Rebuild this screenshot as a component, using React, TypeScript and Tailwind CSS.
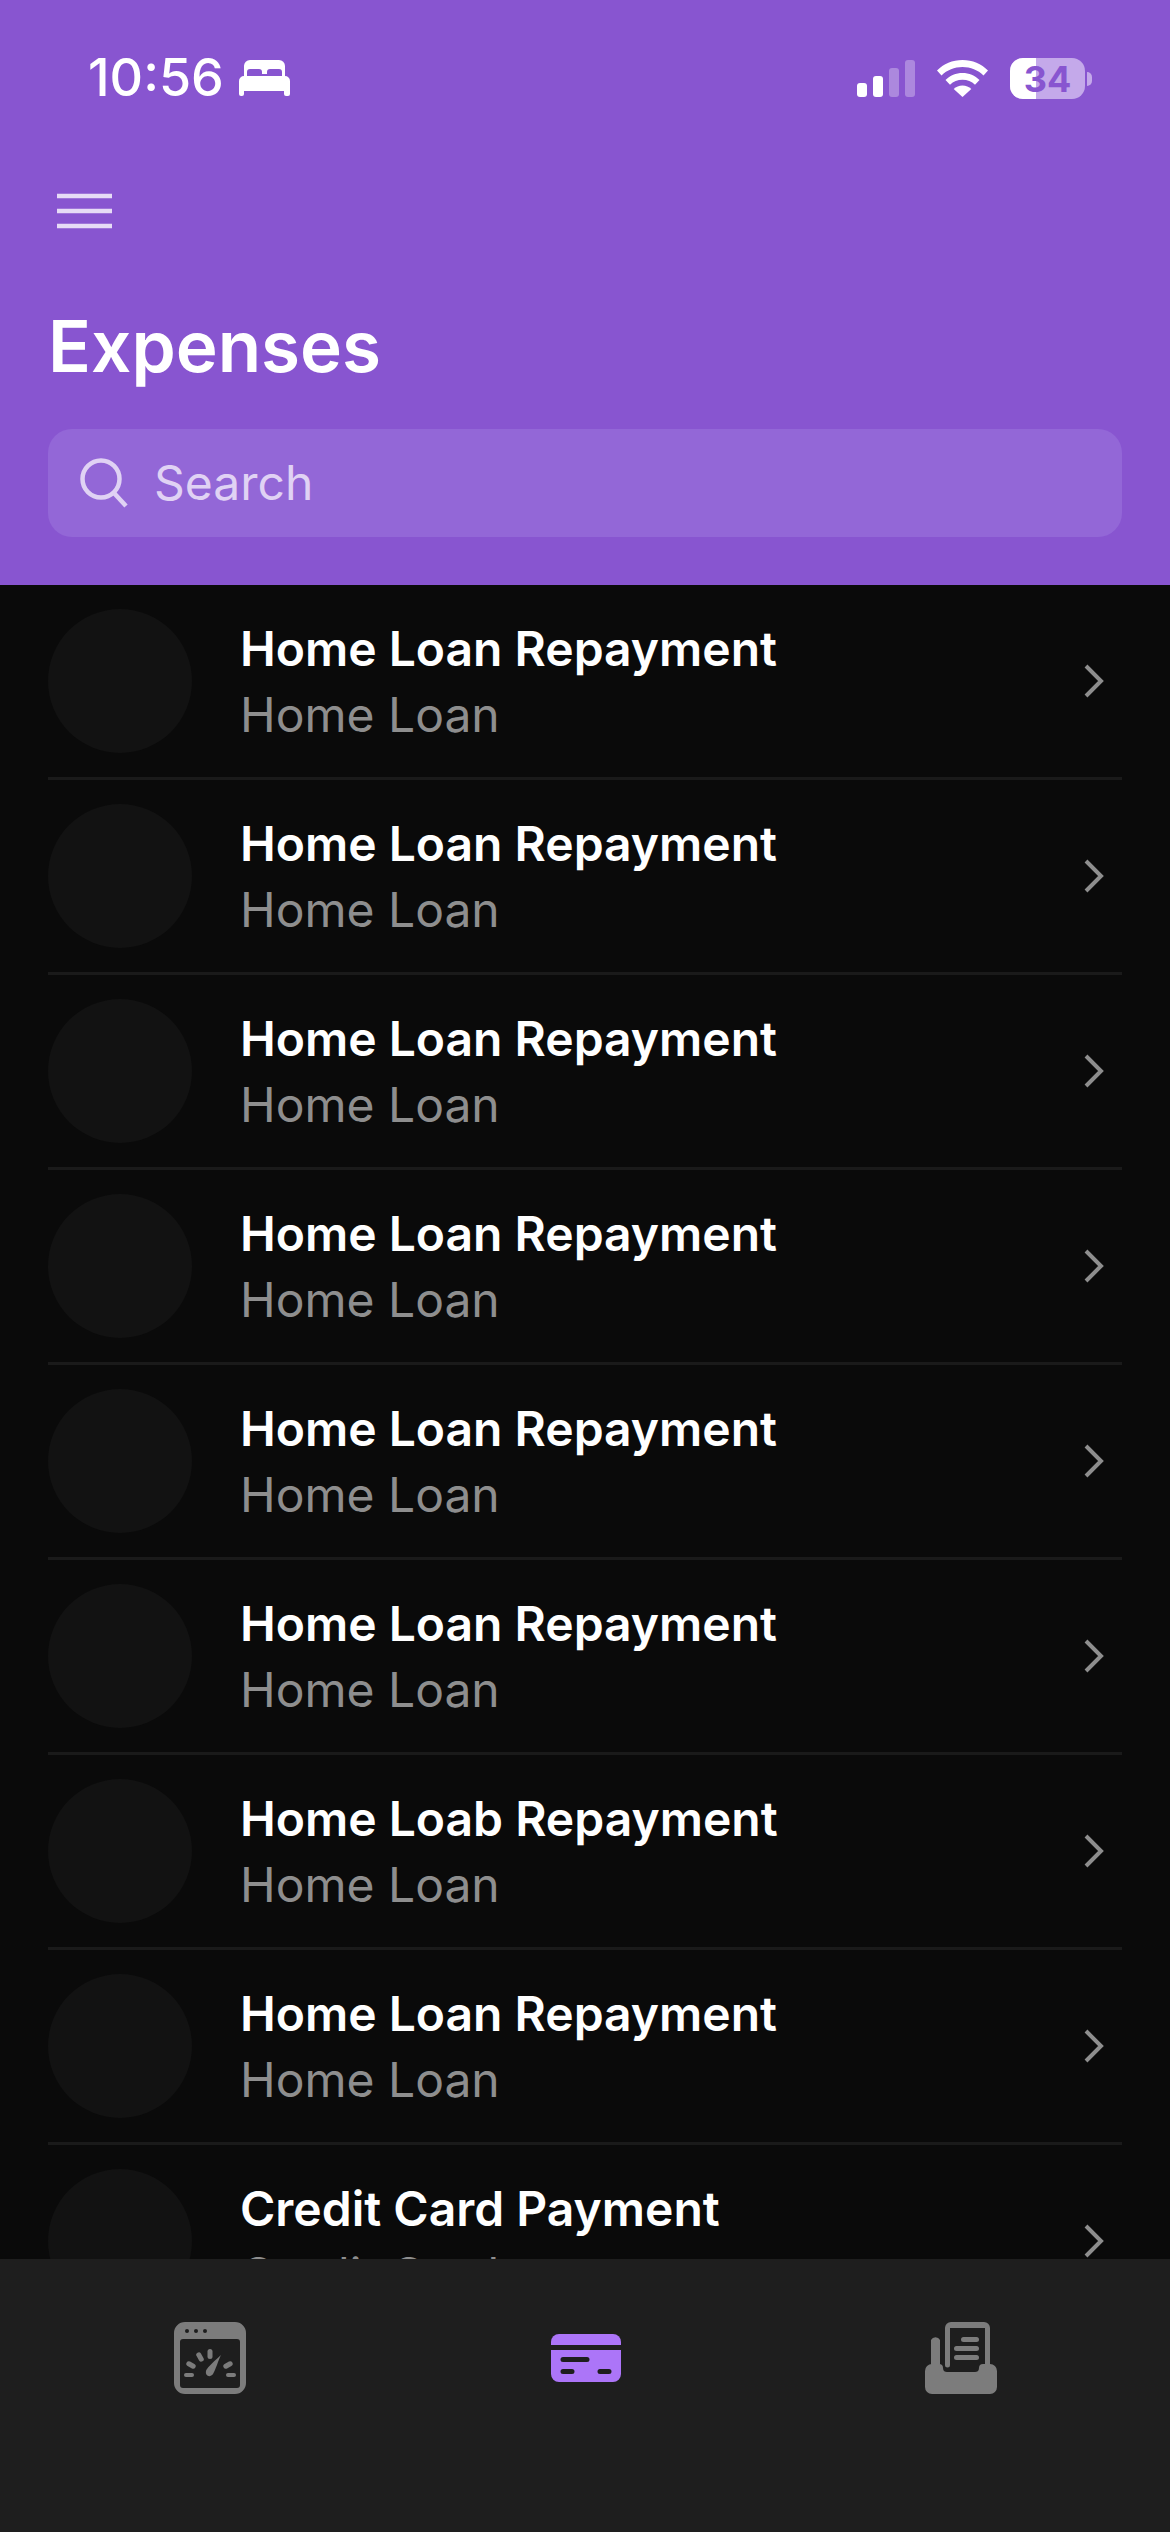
import React from "react";

const rows = [
  "Home Loan Repayment",
  "Home Loan Repayment",
  "Home Loan Repayment",
  "Home Loan Repayment",
  "Home Loan Repayment",
  "Home Loan Repayment",
  "Home Loab Repayment",
  "Home Loan Repayment",
];

const BedIcon = () => (
  <svg width="51" height="36" viewBox="0 0 51 36" className="ml-[15px]" fill="#fff">
    <path d="M5 17V6a6 6 0 0 1 6-6h29a6 6 0 0 1 6 6v11h-3v-5c0-2-1-3-3-3h-9c-2 0-3 1-3 3v2h-5v-2c0-2-1-3-3-3h-9c-2 0-3 1-3 3v5z" />
    <path d="M5 16h41a5 5 0 0 1 5 5v13a2 2 0 0 1-2 2h-2a2 2 0 0 1-2-2v-3H5v3a2 2 0 0 1-2 2H2a2 2 0 0 1-2-2V21a5 5 0 0 1 5-5z" />
  </svg>
);

const Signal = () => (
  <div className="flex items-end gap-[6px]">
    <div className="h-[14px] w-[10px] rounded-[3px] bg-white" />
    <div className="h-[21px] w-[10px] rounded-[3px] bg-white" />
    <div className="h-[29px] w-[10px] rounded-[3px] bg-white/30" />
    <div className="h-[37px] w-[10px] rounded-[3px] bg-white/30" />
  </div>
);

const Wifi = () => (
  <svg width="51" height="37" viewBox="0 0 51 37" fill="#fff">
    <path d="M25.5 0C35.5 0 44.5 4 51 10.5L46.5 15.5C41 10 33.5 7 25.5 7S10 10 4.5 15.5L0 10.5C6.5 4 15.5 0 25.5 0z" />
    <path d="M25.5 13c6.5 0 12.5 2.5 17 7L38 24.8c-3.3-3.2-7.700-5-12.500-5s-9.200 1.800-12.500 5L8.500 20c4.500-4.500 10.500-7 17-7z" />
    <path d="M25.500 25.500c3.400 0 6.500 1.300 8.800 3.500L25.500 37l-8.800-8c2.300-2.200 5.400-3.500 8.800-3.500z" />
  </svg>
);

const Battery = () => (
  <div className="flex items-center gap-[2px]">
    <div className="relative flex h-[41px] w-[75px] items-center justify-center overflow-hidden rounded-[13px] bg-[#c4a9ea]">
      <div className="absolute inset-y-0 left-0 w-[26px] bg-white" />
      <span className="relative text-[36px] font-bold leading-none text-[#8855d0]">34</span>
    </div>
    <div className="h-[14px] w-[5px] rounded-r-full bg-[#c4a9ea]" />
  </div>
);

const GaugeIcon = () => (
  <svg width="72" height="72" viewBox="0 0 72 72">
    <path
      fillRule="evenodd"
      fill="#7c7c7c"
      d="M11 0h50a11 11 0 0 1 11 11v50a11 11 0 0 1-11 11H11A11 11 0 0 1 0 61V11A11 11 0 0 1 11 0zM6 20v43a3 3 0 0 0 3 3h54a3 3 0 0 0 3-3V20a3 3 0 0 0-3-3H9a3 3 0 0 0-3 3z"
    />
    <circle cx="13" cy="9" r="2" fill="#1e1e1e" />
    <circle cx="22" cy="9" r="2" fill="#1e1e1e" />
    <circle cx="31" cy="9" r="2" fill="#1e1e1e" />
    <g fill="#7c7c7c">
      <path d="M47 33C44 39 42 47 39 52 36 56 31 54 32 49 33 46 36 43 47 33z" />
      <rect x="33.500" y="27" width="5" height="10" rx="2.500" />
      <rect x="23.500" y="30" width="5" height="10" rx="2.500" transform="rotate(-30 26 35)" />
      <rect x="14.500" y="38" width="5" height="10" rx="2.500" transform="rotate(-60 17 43)" />
      <rect x="51.500" y="38" width="5" height="10" rx="2.500" transform="rotate(60 54 43)" />
      <rect x="10" y="51" width="10" height="4" rx="2" />
      <rect x="52" y="51" width="10" height="4" rx="2" />
    </g>
  </svg>
);

const CardIcon = () => (
  <svg width="70" height="48" viewBox="0 0 70 48" fill="#ac75f8">
    <path d="M8 0h54a8 8 0 0 1 8 8v3H0V8a8 8 0 0 1 8-8z" />
    <path
      fillRule="evenodd"
      d="M0 16h70v24a8 8 0 0 1-8 8H8a8 8 0 0 1-8-8zM12 23a2.500 2.500 0 0 0 0 5h24a2.500 2.500 0 0 0 0-5zM12 35a2.500 2.500 0 0 0 0 5h9a2.500 2.500 0 0 0 0-5zM49 35a2.500 2.500 0 0 0 0 5h9a2.500 2.500 0 0 0 0-5z"
    />
  </svg>
);

const NewsIcon = () => (
  <svg width="72" height="72" viewBox="0 0 72 72" fill="#7c7c7c">
    <path
      fillRule="evenodd"
      d="M26 0h33a6 6 0 0 1 6 6v36H60V6H25v37a2.500 2.500 0 0 1-5 0V6a6 6 0 0 1 6-6z"
    />
    <path d="M6 43c0-9 0-17 0-25a5 5 0 0 1 9 0v27h-3z" />
    <path d="M7 42h7a4 4 0 0 1 4 4c0 3 2 4 4 4h28c2 0 4-1 4-4a4 4 0 0 1 4-4h7a7 7 0 0 1 7 7v16a7 7 0 0 1-7 7H7a7 7 0 0 1-7-7V49a7 7 0 0 1 7-7z" />
    <rect x="36" y="15" width="18" height="5" rx="2.500" />
    <rect x="29" y="24" width="25" height="5" rx="2.500" />
    <rect x="29" y="33" width="25" height="5" rx="2.500" />
  </svg>
);

const Row = ({ title, sub }: { title: string; sub: string }) => (
  <div className="flex h-[195px] shrink-0 items-center border-b-[3px] border-[#1a1a1a]">
    <div className="h-[144px] w-[144px] shrink-0 rounded-full bg-[#121212]" />
    <div className="ml-[48px] flex-1 pt-[2px]">
      <div className="text-[48px] font-semibold leading-[66px] text-white">{title}</div>
      <div className="text-[48px] leading-[66px] text-[#8e8e8e]">{sub}</div>
    </div>
    <svg width="22" height="34" viewBox="0 0 22 34" fill="none" stroke="#8e8e8e" strokeWidth="4" className="mr-[17px]">
      <path d="M3 2l15 15L3 32" />
    </svg>
  </div>
);

export default function App() {
  return (
    <div className="relative flex h-[2532px] w-[1170px] flex-col overflow-hidden bg-[#0a0a0a] font-['Inter',sans-serif]">
      {/* header */}
      <div className="h-[585px] shrink-0 bg-[#8855d0] px-[48px]">
        <div className="flex h-[155px] items-start justify-between pl-[40px] pr-[30px] pt-[50px]">
          <div className="flex items-center">
            <span className="text-[52px] font-medium leading-[56px] text-white">10:56</span>
            <BedIcon />
          </div>
          <div className="flex items-center gap-[22px] pt-[8px]">
            <Signal />
            <Wifi />
            <Battery />
          </div>
        </div>
        <svg width="56" height="36" viewBox="0 0 56 36" className="ml-[9px] mt-[38px] block" stroke="#e6dbf6" strokeWidth="4.500">
          <path d="M0 3h55M0 18h55M0 33h55" />
        </svg>
        <h1 className="mt-[73px] text-[71px] font-semibold leading-[88px] text-white">Expenses</h1>
        <div className="mt-[39px] flex h-[108px] items-center rounded-[24px] bg-[#9367d7] pl-[32px]">
          <svg width="48" height="50" viewBox="0 0 48 50" fill="none" stroke="#e0d2f4" strokeWidth="4.500">
            <circle cx="21" cy="21" r="18.500" />
            <path d="M34 35l12 13" />
          </svg>
          <span className="ml-[26px] text-[48px] text-[#e0d2f4]">Search</span>
        </div>
      </div>

      {/* list */}
      <div className="flex min-h-0 flex-1 flex-col overflow-hidden px-[48px]">
        {rows.map((title, i) => (
          <Row key={i} title={title} sub="Home Loan" />
        ))}
        <Row title="Credit Card Payment" sub="Credit Card" />
      </div>

      {/* tab bar */}
      <div className="flex h-[273px] shrink-0 items-start bg-[#1e1e1e] pl-[174px] pr-[173px] pt-[63px]">
        <div className="flex w-full items-start justify-between">
          <GaugeIcon />
          <div className="pt-[12px]">
            <CardIcon />
          </div>
          <NewsIcon />
        </div>
      </div>
    </div>
  );
}
